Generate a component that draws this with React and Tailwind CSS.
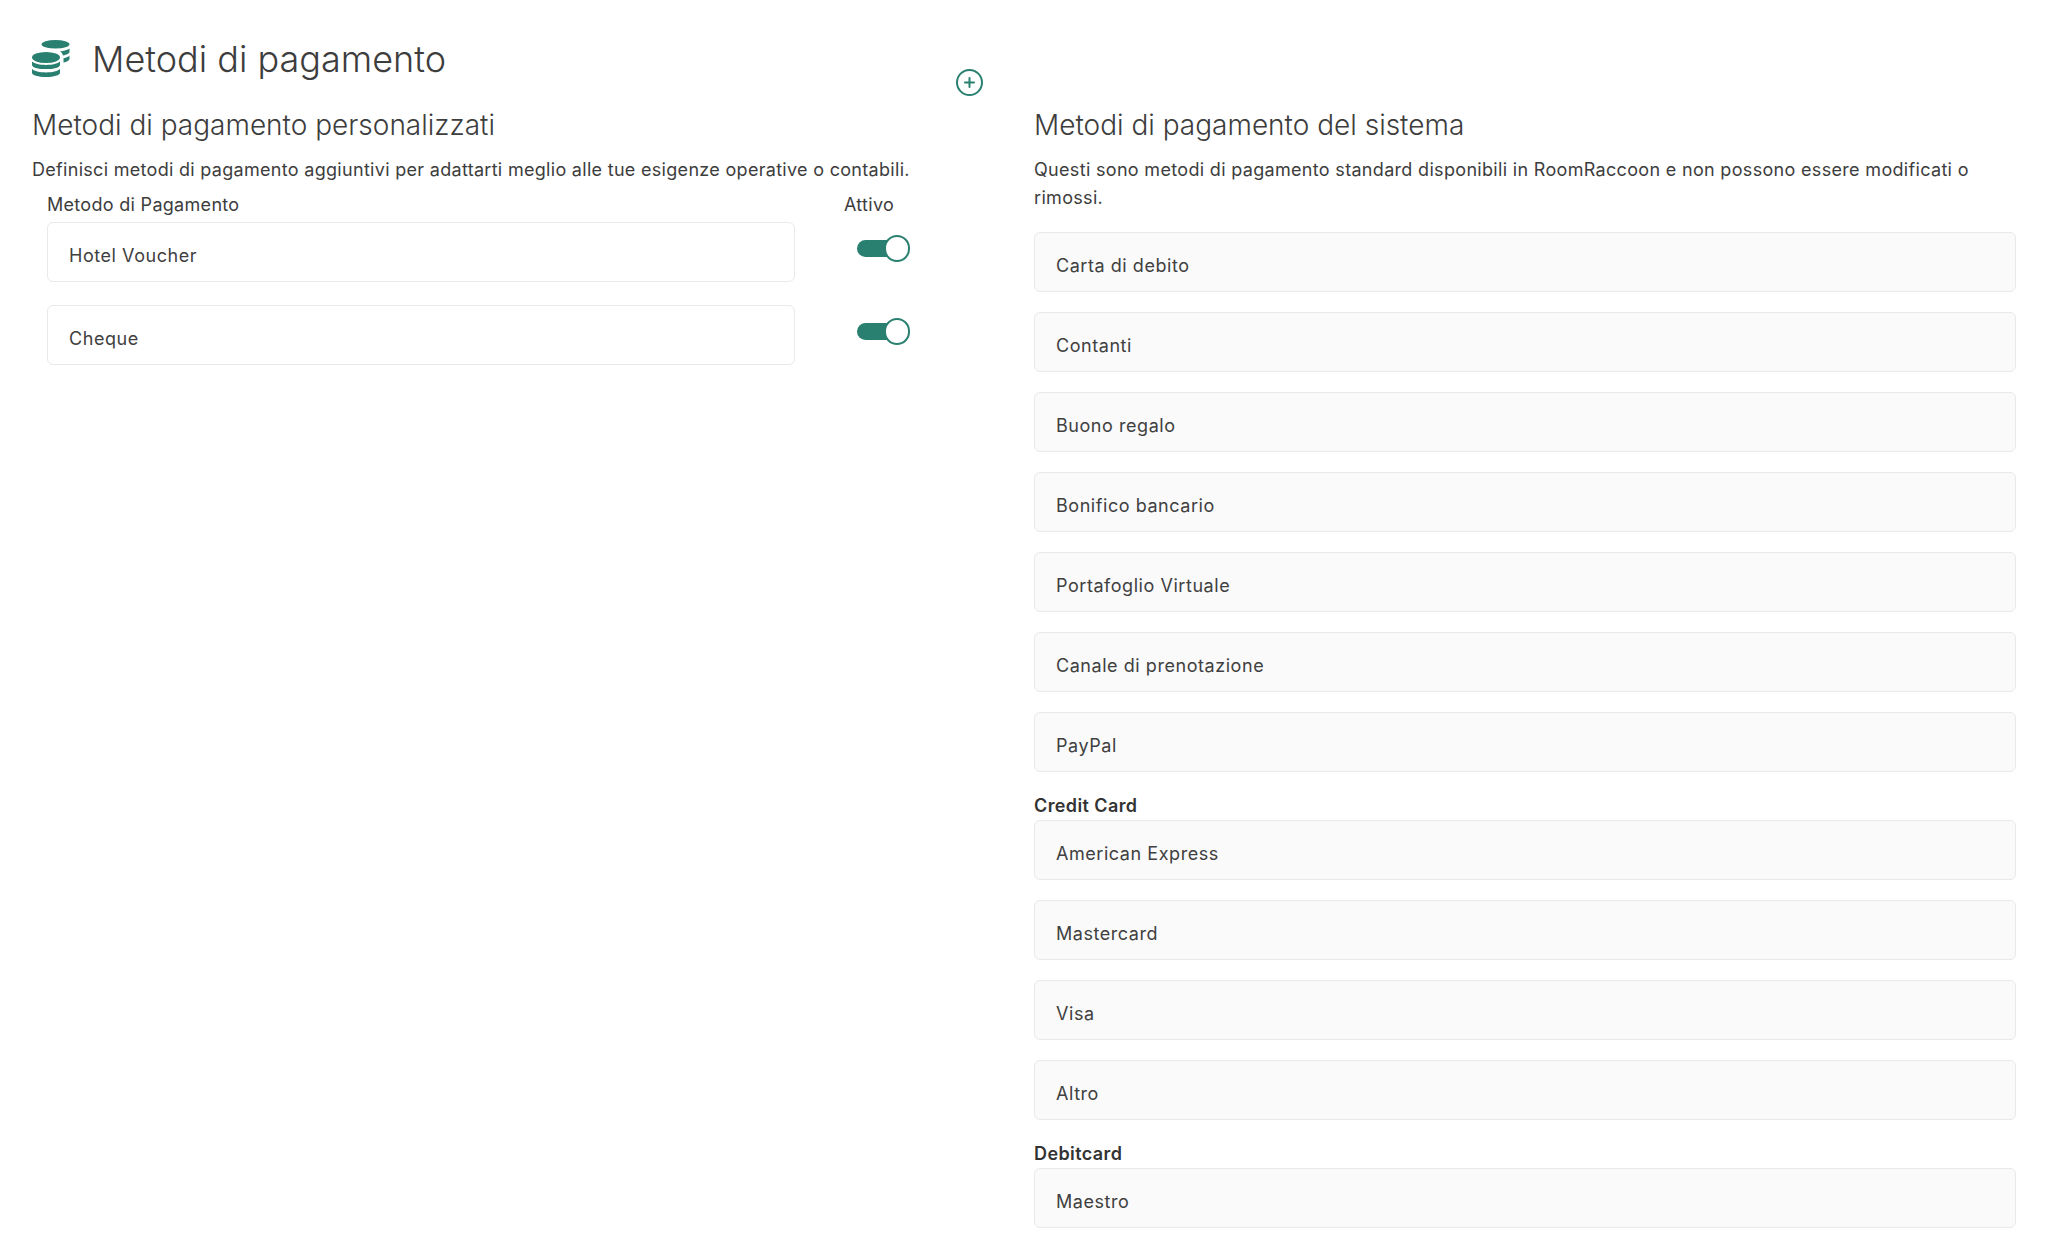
const systemMethods = ['Carta di debito', 'Contanti', 'Buono regalo', 'Bonifico bancario', 'Portafoglio Virtuale', 'Canale di prenotazione', 'PayPal'];
const creditCards = ['American Express', 'Mastercard', 'Visa', 'Altro'];
const customMethods = ['Hotel Voucher', 'Cheque'];

const CoinsIcon = () => (
  <svg width="38" height="38" viewBox="0 0 38 38" className="shrink-0 text-[#2a8070]" fill="currentColor">
    <ellipse cx="23.500" cy="4.300" rx="14" ry="4.300" />
    <path d="M28 11.300c4-.4 7.800-1.300 9.500-2.800v3.600c0 1.500-2.800 2.800-6.500 3.500-.5-1.900-1.500-3.200-3-4.300z" />
    <path d="M31.500 18.200c2.800-.6 5-1.400 6-2.700v3.500c0 1.500-2.500 2.900-6 3.600z" />
    <ellipse cx="14" cy="17.500" rx="14" ry="5.500" />
    <path d="M0 21.500c2.500 2.200 7.500 3.400 14 3.400s11.500-1.200 14-3.400v3.400c0 2.400-6.200 4.200-14 4.200S0 27.300 0 24.900z" />
    <path d="M0 29c2.500 2.200 7.500 3.400 14 3.400S25.500 31.200 28 29v3.700c0 2.600-6.200 4.300-14 4.300S0 35.300 0 32.700z" />
  </svg>
);

const Toggle = () => (
  <div className="flex items-center w-[53px] h-[27px]">
    <div className="w-[40px] h-[17px] rounded-full bg-[#2a8070]" />
    <div className="w-[26px] h-[27px] -ml-[13px] rounded-full bg-white border-2 border-[#2a8070]" />
  </div>
);

const Field = ({ label, muted }) => (
  <div className={`h-[60px] flex items-center px-[21px] pt-[6px] rounded-md border border-[#e9e9e9] text-[18px] tracking-[0.55px] text-[#404040] ${muted ? 'bg-[#fafafa]' : 'bg-white'}`}>
    {label}
  </div>
);

export default function App() {
  return (
    <div className="min-h-screen bg-white text-[#3d3d3d] font-['Inter',sans-serif] pl-[32px] pr-[32px] overflow-hidden">
      <div className="flex items-start justify-between w-[951px] h-[95px]">
        <div className="flex items-center gap-[22px] pt-[36px]">
          <div className="mb-[1px]"><CoinsIcon /></div>
          <h1 className="text-[36px] leading-[46px] font-light text-[#3d3d3d]">Metodi di pagamento</h1>
        </div>
        <button className="mt-[69px] w-[27px] h-[27px] rounded-full border-2 border-[#2a8070] text-[#2a8070] flex items-center justify-center">
          <svg width="15" height="15" viewBox="0 0 15 15" stroke="currentColor" strokeWidth="2" strokeLinecap="round">
            <path d="M7.500 3v9M3 7.500h9" />
          </svg>
        </button>
      </div>

      <div className="flex gap-[48px] pt-[12px]">
        <section className="w-[954px] shrink-0">
          <h2 className="text-[28px] leading-[36px] font-light">Metodi di pagamento personalizzati</h2>
          <p className="mt-[13px] text-[18px] leading-[28px] tracking-[0.3px]">Definisci metodi di pagamento aggiuntivi per adattarti meglio alle tue esigenze operative o contabili.</p>
          <div className="pl-[15px] mt-[7px]">
            <div className="flex text-[18px] leading-[28px] tracking-[0.3px] pb-[3px]">
              <span className="w-[797px]">Metodo di Pagamento</span>
              <span>Attivo</span>
            </div>
            <div className="flex flex-col gap-[23px]">
              {customMethods.map((method) => (
                <div key={method} className="flex items-start">
                  <div className="w-[748px]"><Field label={method} /></div>
                  <div className="ml-[62px] mt-[13px]"><Toggle /></div>
                </div>
              ))}
            </div>
          </div>
        </section>

        <section className="w-[982px] shrink-0">
          <h2 className="text-[28px] leading-[36px] font-light">Metodi di pagamento del sistema</h2>
          <p className="mt-[13px] text-[18px] leading-[28px] tracking-[0.32px]">Questi sono metodi di pagamento standard disponibili in RoomRaccoon e non possono essere modificati o rimossi.</p>
          <div className="mt-[20px] flex flex-col gap-[20px]">
            {systemMethods.map((method) => <Field key={method} label={method} muted />)}
          </div>
          <h3 className="mt-[20px] text-[18px] leading-[28px] font-semibold tracking-[0.4px] text-[#333]">Credit Card</h3>
          <div className="flex flex-col gap-[20px]">
            {creditCards.map((method) => <Field key={method} label={method} muted />)}
          </div>
          <h3 className="mt-[20px] text-[18px] leading-[28px] font-semibold tracking-[0.4px] text-[#333]">Debitcard</h3>
          <Field label="Maestro" muted />
        </section>
      </div>
    </div>
  );
}
